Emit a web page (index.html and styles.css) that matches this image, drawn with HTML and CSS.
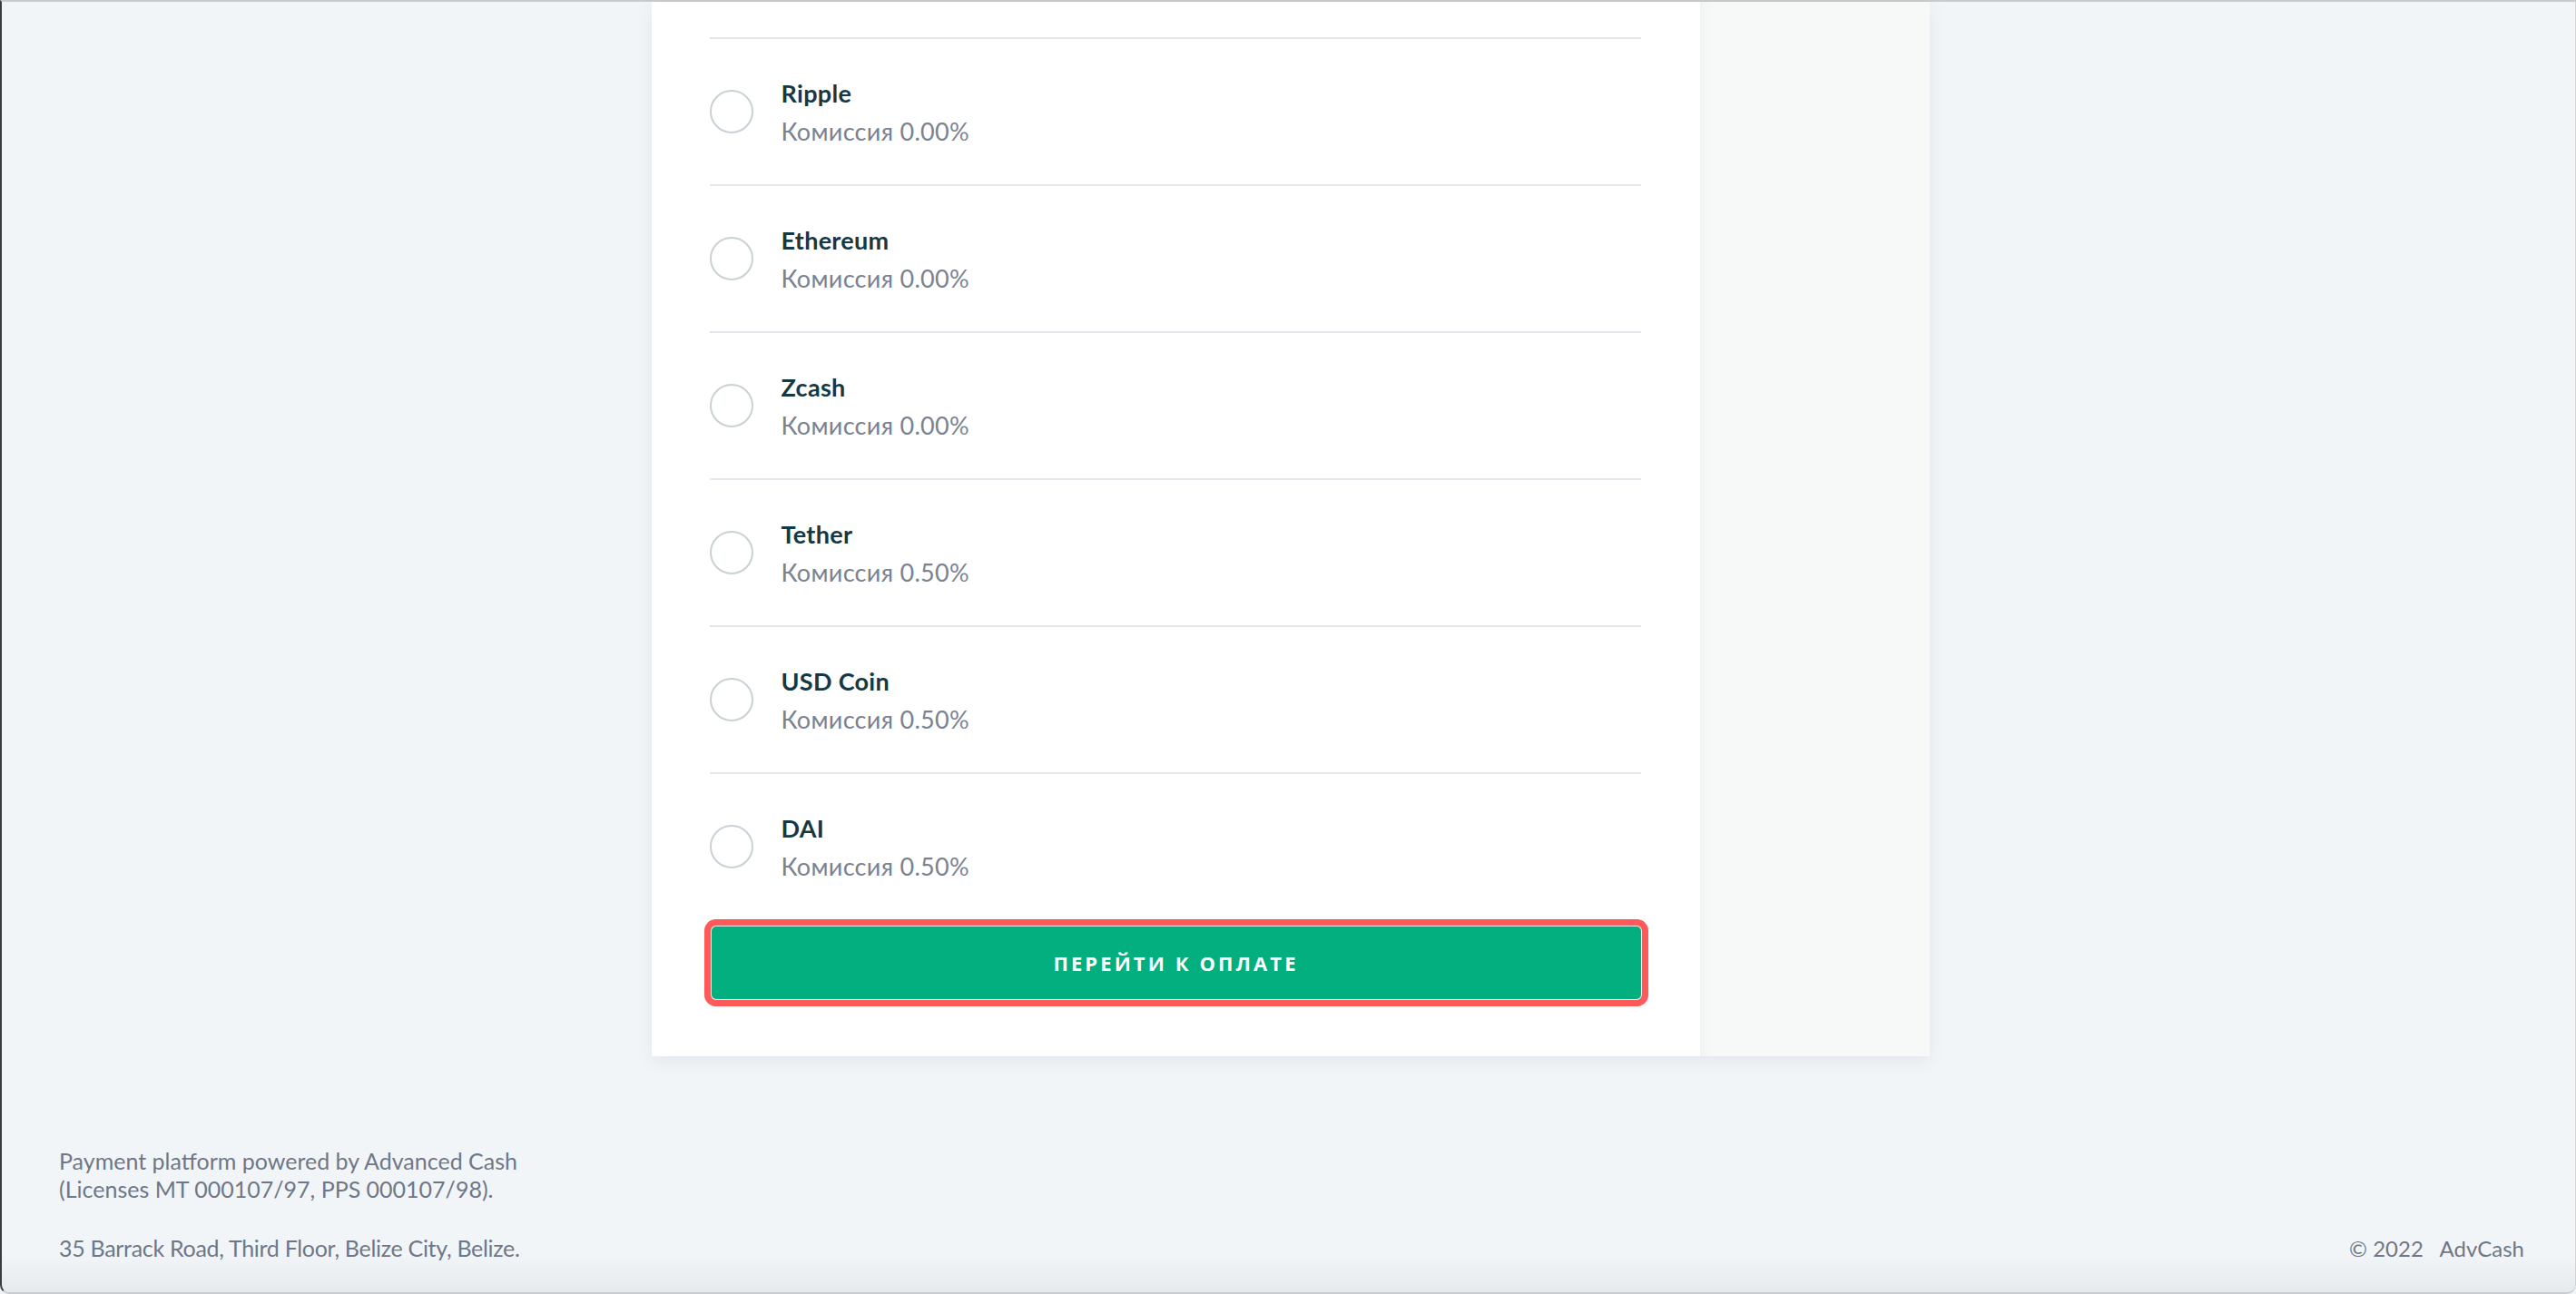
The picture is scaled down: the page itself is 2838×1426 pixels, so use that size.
FILE: index.html
```html
<!DOCTYPE html>
<html lang="ru">
<head>
<meta charset="utf-8">
<title>AdvCash</title>
<link rel="stylesheet" href="styles.css">
</head>
<body>
<div class="page">
  <main class="main">
    <div class="wrap">
      <section class="card">
        <div class="methods">
          <label class="method">
            <span class="radio"></span>
            <span class="info"><span class="name">Ripple</span><span class="fee">Комиссия 0.00%</span></span>
          </label>
          <label class="method">
            <span class="radio"></span>
            <span class="info"><span class="name">Ethereum</span><span class="fee">Комиссия 0.00%</span></span>
          </label>
          <label class="method">
            <span class="radio"></span>
            <span class="info"><span class="name">Zcash</span><span class="fee">Комиссия 0.00%</span></span>
          </label>
          <label class="method">
            <span class="radio"></span>
            <span class="info"><span class="name">Tether</span><span class="fee">Комиссия 0.50%</span></span>
          </label>
          <label class="method">
            <span class="radio"></span>
            <span class="info"><span class="name">USD Coin</span><span class="fee">Комиссия 0.50%</span></span>
          </label>
          <label class="method">
            <span class="radio"></span>
            <span class="info"><span class="name">DAI</span><span class="fee">Комиссия 0.50%</span></span>
          </label>
        </div>
        <button class="pay">ПЕРЕЙТИ К ОПЛАТЕ</button>
      </section>
      <aside class="side"></aside>
    </div>
  </main>
  <footer class="footer">
    <div class="legal">
      <p>Payment platform powered by Advanced Cash<br>(Licenses MT 000107/97, PPS 000107/98).</p>
      <p class="addr">35 Barrack Road, Third Floor, Belize City, Belize.</p>
    </div>
    <div class="copy">© 2022&nbsp;&nbsp; AdvCash</div>
  </footer>
</div>
</body>
</html>
```
FILE: styles.css
```css
* { box-sizing: border-box; }
html, body { margin: 0; padding: 0; }
body {
  background: #f2f5f8;
  font-family: Lato, "Open Sans", "Noto Sans", sans-serif;
  height: 1426px;
  overflow: hidden;
}
.page {
  height: 1426px;
  border-top: 2px solid #c9cbcd;
  border-left: 2px solid #3a3d40;
  border-right: 1px solid #d4d6d8;
  border-bottom: 2px solid #c9ccd0;
  border-radius: 0 0 10px 10px;
  display: flex;
  flex-direction: column;
  background: linear-gradient(to bottom, #f2f5f8 0, #f2f5f8 1380px, #e6e9ec 1426px);
}
.main {
  display: flex;
  justify-content: center;
}
.wrap {
  display: flex;
  margin-left: 4px;
  box-shadow: 0 6px 18px rgba(30, 50, 70, 0.07);
}
.card {
  width: 1155px;
  background: #fff;
  padding: 39px 65px 63px 64px;
}
.side {
  width: 253px;
  background: #f7f8f8;
  box-shadow: inset 14px 0 14px -10px rgba(0, 0, 0, 0.03);
}
.methods { display: flex; flex-direction: column; }
.method {
  display: flex;
  align-items: center;
  height: 162px;
  border-top: 2px solid #e4e8ec;
  cursor: pointer;
}
.radio {
  width: 48px;
  height: 48px;
  border: 2px solid #c9d1d5;
  border-radius: 50%;
  flex: none;
  margin-right: 31px;
}
.info {
  display: flex;
  flex-direction: column;
  line-height: 42px;
  font-size: 27px;
  letter-spacing: 0.3px;
  padding-top: 1px;
}
.name {
  color: #163845;
  font-weight: 700;
}
.fee {
  color: #7a8290;
}
.pay {
  display: block;
  width: 1024px;
  height: 80px;
  margin: 8px 0 0 2px;
  border: none;
  border-radius: 5px;
  background: #03af7f;
  color: #fff;
  font-family: "Open Sans", Lato, sans-serif;
  font-weight: 700;
  font-size: 22px;
  letter-spacing: 3.1px;
  box-shadow: 0 0 0 1px #f3f3f3, 0 0 0 8px #fe5a5a;
}
.footer {
  display: flex;
  justify-content: space-between;
  align-items: flex-end;
  padding: 0 56px 0 63px;
  margin-top: 100px;
  color: #6f7786;
  font-size: 25px;
  line-height: 31px;
}
.legal p { margin: 0; }
.legal p + p { margin-top: 34px; }
.addr { letter-spacing: -0.3px; }
.copy { white-space: nowrap; font-size: 24px; }
```
